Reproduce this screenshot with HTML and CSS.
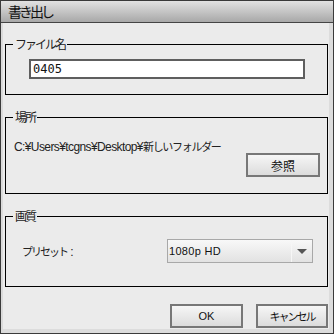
FILE: index.html
```html
<!DOCTYPE html>
<html lang="ja">
<head>
  <meta charset="UTF-8" />
  <title>書き出し</title>
  <link rel="stylesheet" href="styles.css">
</head>
<body>
  <div class="window">
    <div class="titlebar">書き出し</div>

    <div class="content">
      <!-- file name -->
      <fieldset class="group group-name">
        <legend>ファイル名</legend>
        <div class="name-row">
          <input class="name-input" type="text" value="0405" />
        </div>
      </fieldset>

      <!-- location -->
      <fieldset class="group group-place">
        <legend>場所</legend>
        <div class="path">C:¥Users¥tcgns¥Desktop¥<span class="jp">新しいフォルダー</span></div>
        <div class="browse-row">
          <button class="btn btn-browse"><span class="jp">参照</span></button>
        </div>
      </fieldset>

      <!-- quality -->
      <fieldset class="group group-quality">
        <legend>画質</legend>
        <div class="preset-row">
          <span class="preset-label"><span class="jp">プリセット</span> :</span>
          <div class="select">
            <span class="select-value">1080p HD</span>
            <span class="select-arrow"></span>
          </div>
        </div>
      </fieldset>

      <div class="actions">
        <button class="btn btn-ok">OK</button>
        <button class="btn btn-cancel"><span class="jp">キャンセル</span></button>
      </div>
    </div>
  </div>
</body>
</html>
```

FILE: styles.css
```css
body {
  margin: 0;
  padding: 0;
  font-family: 'Liberation Sans', 'Noto Sans CJK JP', sans-serif;
  font-size: 12px;
  color: #111;
}

.jp {
  font-family: 'Noto Sans CJK JP', sans-serif;
  font-size: 11px;
  letter-spacing: -2px;
}

.window {
  width: 334px;
  height: 334px;
  box-sizing: border-box;
  border: 1px solid #3a3a3a;
  background: #ebebeb;
  box-shadow: inset 2px 0 0 #dadada, inset -4px -4px 0 #dcdcdc;
  display: flex;
  flex-direction: column;
}

.titlebar {
  height: 21px;
  line-height: 21px;
  border-bottom: 1px solid #444;
  background: linear-gradient(#e2e2e2, #a8a8a8);
  padding-left: 7px;
  font-family: 'Noto Sans CJK JP', sans-serif;
  font-size: 14px;
  letter-spacing: -3px;
  color: #111;
}

.content {
  padding: 14px 5px 0 4px;
  display: flex;
  flex-direction: column;
}

.group {
  margin: 0;
  padding: 0;
  border: 1px solid #000;
  min-width: 0;
}

.group legend {
  margin-left: 7px;
  padding: 0 2px;
  line-height: 14px;
  font-family: 'Noto Sans CJK JP', sans-serif;
  font-size: 12px;
  letter-spacing: -2px;
  color: #222;
}

.group-place,
.group-quality {
  margin-top: 15px;
}

.name-row {
  padding: 8px 22px 15px 23px;
}

.name-input {
  display: block;
  width: 100%;
  box-sizing: border-box;
  height: 20px;
  margin: 0;
  border: 2px solid #5e5e5e;
  background: #fff;
  padding: 0 2px;
  font-family: 'DejaVu Sans Mono', monospace;
  font-size: 12px;
  color: #111;
}

.path {
  padding: 15px 0 0 8px;
  height: 14px;
  line-height: 14px;
  white-space: nowrap;
  letter-spacing: -0.6px;
  color: #222;
}

.path .jp {
  letter-spacing: -1.3px;
}

.browse-row {
  display: flex;
  justify-content: flex-end;
  padding: 0 7px 16px 0;
}

.btn {
  margin: 0;
  height: 24px;
  box-sizing: border-box;
  border: 2px solid #777;
  background: linear-gradient(#f6f6f6, #dcdcdc);
  font-family: 'Liberation Sans', 'Noto Sans CJK JP', sans-serif;
  font-size: 11px;
  color: #111;
  padding: 0;
}

.btn-browse {
  width: 74px;
}

.btn-browse .jp {
  font-size: 12px;
  letter-spacing: 0;
}

.preset-row {
  display: flex;
  align-items: center;
  padding: 16px 14px 23px 16px;
}

.preset-label {
  flex: 1;
  color: #222;
}

.select {
  width: 146px;
  height: 24px;
  box-sizing: border-box;
  border: 1px solid #a8a8a8;
  background: linear-gradient(#f8f8f8, #e2e2e2);
  display: flex;
  align-items: center;
}

.select-value {
  flex: 1;
  padding-left: 1px;
  font-size: 11px;
  letter-spacing: 0.3px;
}

.select-arrow {
  width: 20px;
  height: 22px;
  border-left: 1px solid #f6f6f6;
  display: flex;
  align-items: center;
  justify-content: center;
}

.select-arrow::before {
  content: '';
  border-left: 5px solid transparent;
  border-right: 5px solid transparent;
  border-top: 5px solid #555;
}

.actions {
  display: flex;
  justify-content: flex-end;
  gap: 13px;
  padding: 17px 0 0 0;
}

.btn-ok {
  width: 73px;
}

.btn-cancel {
  width: 72px;
}
```
